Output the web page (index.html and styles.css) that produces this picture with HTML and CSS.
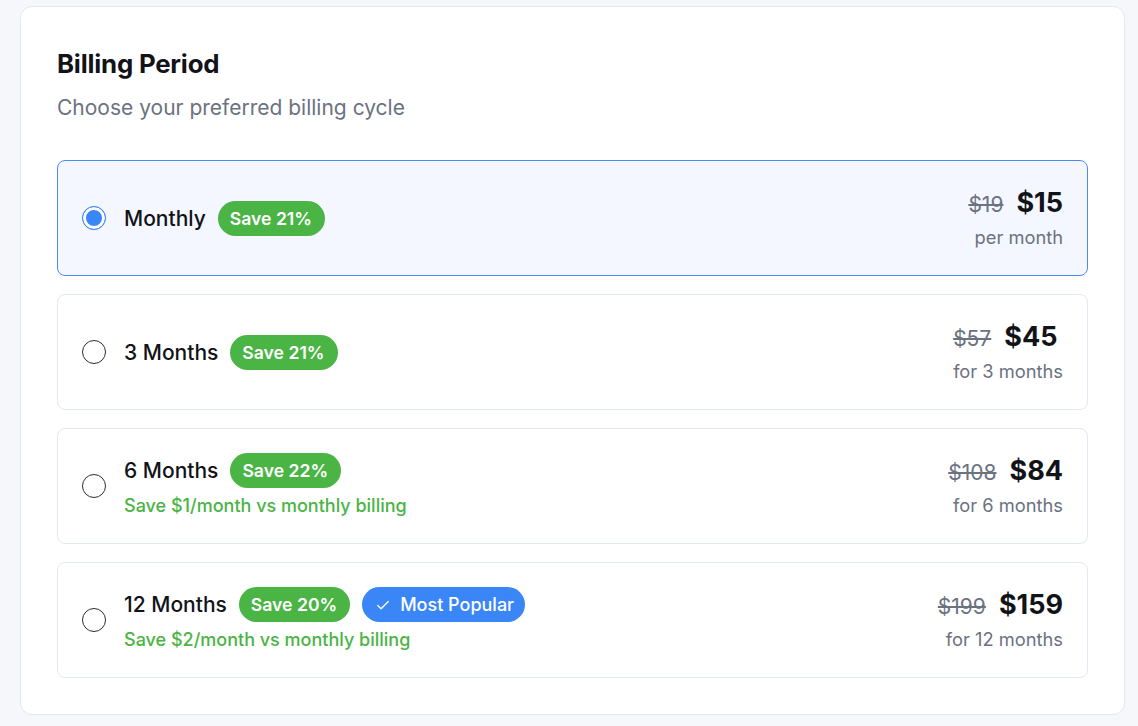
FILE: index.html
```html
<!DOCTYPE html>
<html lang="en">
<head>
<meta charset="utf-8">
<title>Billing Period</title>
<link rel="stylesheet" href="styles.css">
</head>
<body>
<div class="card">
  <h2 class="title">Billing Period</h2>
  <p class="subtitle">Choose your preferred billing cycle</p>
  <div class="options">
    <label class="option selected">
      <input type="radio" name="period" class="radio" checked>
      <div class="info">
        <div class="name-row">
          <span class="name">Monthly</span>
          <span class="badge save">Save 21%</span>
        </div>
      </div>
      <div class="price">
        <div class="price-row"><span class="old">$19</span><span class="new">$15</span></div>
        <div class="per">per month</div>
      </div>
    </label>
    <label class="option">
      <input type="radio" name="period" class="radio">
      <div class="info">
        <div class="name-row">
          <span class="name">3 Months</span>
          <span class="badge save">Save 21%</span>
        </div>
      </div>
      <div class="price">
        <div class="price-row"><span class="old">$57</span><span class="new">$45</span></div>
        <div class="per">for 3 months</div>
      </div>
    </label>
    <label class="option">
      <input type="radio" name="period" class="radio">
      <div class="info">
        <div class="name-row">
          <span class="name">6 Months</span>
          <span class="badge save">Save 22%</span>
        </div>
        <div class="note">Save $1/month vs monthly billing</div>
      </div>
      <div class="price">
        <div class="price-row"><span class="old">$108</span><span class="new">$84</span></div>
        <div class="per">for 6 months</div>
      </div>
    </label>
    <label class="option">
      <input type="radio" name="period" class="radio">
      <div class="info">
        <div class="name-row">
          <span class="name">12 Months</span>
          <span class="badge save">Save 20%</span>
          <span class="badge popular"><svg class="check" viewBox="0 0 16 16" width="14" height="14"><path d="M2 8.5l3.8 3.8L14 4" fill="none" stroke="#fff" stroke-width="1.5" stroke-linecap="round" stroke-linejoin="round"/></svg>Most Popular</span>
        </div>
        <div class="note">Save $2/month vs monthly billing</div>
      </div>
      <div class="price">
        <div class="price-row"><span class="old">$199</span><span class="new">$159</span></div>
        <div class="per">for 12 months</div>
      </div>
    </label>
  </div>
</div>
</body>
</html>
```

FILE: styles.css
```css
* { box-sizing: border-box; }
html, body { margin: 0; }
body {
  background: #f5f7fa;
  font-family: Inter, "Noto Sans", sans-serif;
  padding: 6px 13px 12px 20px;
}
.card {
  background: #fff;
  border: 1px solid #e2e8f0;
  border-radius: 12px;
  padding: 36px;
}
.title {
  margin: 0;
  font-size: 25.8px;
  line-height: 42px;
  font-weight: 700;
  color: #111318;
  letter-spacing: -0.2px;
}
.subtitle {
  margin: 9px 0 0;
  font-size: 21px;
  line-height: 28px;
  color: #6b7280;
}
.options {
  margin-top: 38px;
  display: flex;
  flex-direction: column;
  gap: 18px;
}
.option {
  display: flex;
  align-items: center;
  height: 116px;
  padding: 0 24px;
  border: 1px solid #e2e8f0;
  border-radius: 8px;
  background: #fff;
}
.option.selected {
  background: #f4f7ff;
  border-color: #4a8af4;
}
.radio {
  appearance: none;
  -webkit-appearance: none;
  width: 24px;
  height: 24px;
  margin: 0;
  border: 1.5px solid #2a2d33;
  border-radius: 50%;
  background: #fff;
  flex: none;
}
.radio:checked {
  border-color: #3b86f7;
  background: #3b86f7;
  box-shadow: inset 0 0 0 3px #fff;
}
.info {
  flex: 1;
  margin-left: 18px;
  display: flex;
  flex-direction: column;
  gap: 5px;
}
.name-row {
  display: flex;
  align-items: center;
  gap: 12px;
}
.name {
  font-size: 21px;
  font-weight: 500;
  color: #111318;
}
.badge {
  display: inline-flex;
  align-items: center;
  height: 35px;
  padding: 0 13px 0 12px;
  border-radius: 18px;
  font-size: 17.6px;
  font-weight: 600;
  color: #fff;
}
.badge.save { background: #4ab445; }
.badge.popular { background: #3b86f7; font-size: 18px; font-weight: 500; gap: 10px; padding: 0 11px 0 14px; }
.check { flex: none; }
.note {
  font-size: 18px;
  line-height: 26px;
  font-weight: 500;
  color: #4ab445;
}
.price {
  text-align: right;
  display: flex;
  flex-direction: column;
}
.price-row {
  display: flex;
  align-items: baseline;
  gap: 13px;
  line-height: 36px;
}
.old {
  font-size: 21px;
  color: #6b7280;
  text-decoration: line-through;
}
.new {
  font-size: 27px;
  font-weight: 700;
  color: #111318;
}
.per {
  font-size: 18.3px;
  line-height: 28px;
  color: #6b7280;
}
```
